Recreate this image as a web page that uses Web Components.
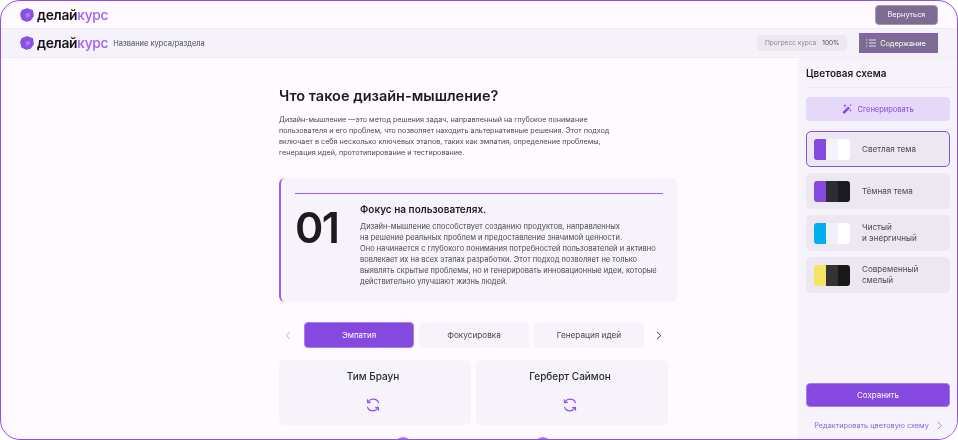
<!DOCTYPE html>
<html lang="ru">
<head>
<meta charset="utf-8">
<title>Делай курс</title>
<style>
  html, body { margin: 0; height: 100%; background: #fff; overflow: hidden; }
  body { font-family: Inter, "Noto Sans", sans-serif; color: #1d1b20; }
</style>
</head>
<body>
<app-frame>
  <top-bar></top-bar>
  <course-bar></course-bar>
  <div style="display:flex;flex:1;min-height:0">
    <lesson-main>
      <h-title slot="title">Что такое дизайн-мышление?</h-title>
      <step-card></step-card>
      <step-tabs></step-tabs>
      <div style="display:grid;grid-template-columns:192px 192px;gap:5px;margin-top:12px">
        <flip-card>Тим Браун</flip-card>
        <flip-card>Герберт Саймон</flip-card>
      </div>
      <div style="display:grid;grid-template-columns:192px 192px;gap:5px;margin-top:12px">
        <next-dot style="margin-left:115px"></next-dot>
        <next-dot style="margin-left:58px"></next-dot>
      </div>
    </lesson-main>
    <scheme-panel>
      <scheme-item a="#8549e0" b="#f5f2fa" c="#ffffff" selected>Светлая тема</scheme-item>
      <scheme-item a="#8549e0" b="#2e2c33" c="#1c1b1f">Тёмная тема</scheme-item>
      <scheme-item a="#00aff0" b="#eef1f5" c="#ffffff">Чистый<br>и энергичный</scheme-item>
      <scheme-item a="#f5e368" b="#333333" c="#191919">Современный<br>смелый</scheme-item>
    </scheme-panel>
  </div>
</app-frame>

<script>
const logo = `
  <svg width="14" height="14" viewBox="0 0 14 14" style="flex:none">
    <path d="M7 .9 12.3 2.8 13.1 8 10.2 12.1 6.4 13.1 2.2 11 .9 6 2.2 2.8Z" fill="#8a4fe6" stroke="#8a4fe6" stroke-width="1.6" stroke-linejoin="round"/>
    <path d="M5.4 6.2 9.6 4.4 10.2 8 6.6 10Z" fill="#b48cf2" opacity=".8"/>
  </svg>
  <span class="word">делай<b>курс</b></span>`;
const logoCss = `
  .logo { display: flex; align-items: center; gap: 3px; }
  .word { font: 600 13.8px/16px Inter, sans-serif; letter-spacing: -.3px; color: #17151b; }
  .word b { font-weight: 500; color: #a060f8; }`;

class AppFrame extends HTMLElement {
    connectedCallback() {
        this.attachShadow({ mode: 'open' }).innerHTML = `
            <style>
                :host {
                    display: flex; flex-direction: column; box-sizing: border-box;
                    width: 958px; height: 440px; overflow: hidden;
                    border: 1px solid #8f4ff0; border-radius: 20px; background: #fffaff;
                    will-change: transform;
                }
            </style>
            <slot></slot>`;
    }
}

class TopBar extends HTMLElement {
    connectedCallback() {
        this.attachShadow({ mode: 'open' }).innerHTML = `
            <style>
                :host {
                    display: flex; flex: none; justify-content: space-between; align-items: center;
                    height: 28px; padding: 0 19px; box-sizing: border-box;
                    border-bottom: 1px solid #eeebf2;
                }
                ${logoCss}
                button {
                    width: 63px; height: 20px; border: 1px solid #a596b8; border-radius: 4px; padding: 0;
                    background: #7d6b93; color: #fff; font: 400 7.3px Inter, sans-serif;
                }
            </style>
            <div class="logo">${logo}</div>
            <button>Вернуться</button>`;
    }
}

class CourseBar extends HTMLElement {
    connectedCallback() {
        this.attachShadow({ mode: 'open' }).innerHTML = `
            <style>
                :host {
                    display: flex; flex: none; align-items: center;
                    height: 29px; padding: 0 19px; box-sizing: border-box;
                    background: #f5f3f9; border-bottom: 1px solid #eeebf2;
                }
                ${logoCss}
                .name { margin-left: 5px; font-size: 7.5px; color: #4b4852; }
                .progress {
                    margin-left: auto; display: flex; align-items: center; gap: 6px;
                    width: 90px; height: 16px; padding: 0 8px; border-radius: 4px; box-sizing: border-box;
                    background: #ebe8ef; font-size: 6.5px; color: #8c8894; white-space: nowrap;
                }
                .progress b { font-weight: 400; color: #4b4852; }
                .contents {
                    margin-left: 12px; display: flex; align-items: center; justify-content: center; gap: 4px;
                    width: 79px; height: 20px; padding-right: 5px; box-sizing: border-box;
                    background: #7d6b93; border: solid #8f4ff0; border-width: 1px 0;
                    color: #fff; font-size: 7.3px;
                }
            </style>
            <div class="logo">${logo}</div>
            <span class="name">Название курса/раздела</span>
            <div class="progress">Прогресс курса <b>100%</b></div>
            <div class="contents">
                <svg width="10" height="8" viewBox="0 0 10 8" fill="none" stroke="#fff" stroke-width=".8">
                    <path d="M0 1h1.2M0 4h1.2M0 7h1.2M3 1h7M3 4h7M3 7h7"/>
                </svg>
                Содержание
            </div>`;
    }
}

class HTitle extends HTMLElement {
    connectedCallback() {
        this.attachShadow({ mode: 'open' }).innerHTML = `
            <style>:host { display: block; font-size: 14.5px; font-weight: 600; line-height: 20px; color: #1d1b20; }</style>
            <slot></slot>`;
    }
}

class LessonMain extends HTMLElement {
    connectedCallback() {
        this.attachShadow({ mode: 'open' }).innerHTML = `
            <style>
                :host { display: block; flex: 1; min-width: 0; padding: 28px 0 0 278px; box-sizing: border-box; }
                p { margin: 8px 0 20px; font-size: 7.2px; line-height: 11px; color: #4b4852; white-space: nowrap; }
            </style>
            <slot name="title"></slot>
            <p>Дизайн-мышление —это метод решения задач, направленный на глубокое понимание<br>
            пользователя и его проблем, что позволяет находить альтернативные решения. Этот подход<br>
            включает в себя несколько ключевых этапов, таких как эмпатия, определение проблемы,<br>
            генерация идей, прототипирование и тестирование.</p>
            <slot></slot>`;
    }
}

class StepCard extends HTMLElement {
    connectedCallback() {
        this.attachShadow({ mode: 'open' }).innerHTML = `
            <style>
                :host {
                    display: block; box-sizing: border-box; width: 399px; height: 124px;
                    padding: 15px 15px 0 14px; border-left: 2px solid #9a5cf5; border-radius: 6px;
                    background: #f6f3fa;
                }
                hr { margin: 0; border: 0; height: 1px; background: #9a5cf5; }
                .row { display: flex; margin-top: 9px; }
                .num { flex: none; width: 65px; font-size: 43px; font-weight: 600; line-height: 44px; margin-top: 2px; color: #1d1b20; letter-spacing: -1.5px; }
                h3 { margin: 0 0 5px; font-size: 10px; font-weight: 600; line-height: 13px; color: #1d1b20; }
                p { margin: 0; font-size: 7.5px; line-height: 11px; color: #4b4852; white-space: nowrap; }
            </style>
            <hr>
            <div class="row">
                <div class="num">01</div>
                <div>
                    <h3>Фокус на пользователях.</h3>
                    <p>Дизайн-мышление способствует созданию продуктов, направленных<br>
                    на решение реальных проблем и предоставление значимой ценности.<br>
                    Оно начинается с глубокого понимания потребностей пользователей и активно<br>
                    вовлекает их на всех этапах разработки. Этот подход позволяет не только<br>
                    выявлять скрытые проблемы, но и генерировать инновационные идеи, которые<br>
                    действительно улучшают жизнь людей.</p>
                </div>
            </div>`;
    }
}

class StepTabs extends HTMLElement {
    connectedCallback() {
        this.attachShadow({ mode: 'open' }).innerHTML = `
            <style>
                :host { display: flex; align-items: center; gap: 5px; margin-top: 20px; }
                svg { flex: none; }
                .prev { margin: 0 8px 0 6px; }
                .next { margin-left: 7px; }
                .tab {
                    flex: none; width: 110px; height: 26px; box-sizing: border-box; border-radius: 4px;
                    display: flex; align-items: center; justify-content: center;
                    background: #f6f3fa; font-size: 8.2px; color: #4b4852;
                }
                .tab.on { background: #8549e0; border: 1px solid #a77cec; color: #fff; font-size: 8px; }
            </style>
            <svg class="prev" width="6" height="9" viewBox="0 0 6 9" fill="none" stroke="#b4b0bb"><path d="M5 .8 1.2 4.5 5 8.2"/></svg>
            <div class="tab on">Эмпатия</div>
            <div class="tab">Фокусировка</div>
            <div class="tab">Генерация идей</div>
            <svg class="next" width="6" height="9" viewBox="0 0 6 9" fill="none" stroke="#36333c"><path d="M1 .8 4.8 4.5 1 8.2"/></svg>`;
    }
}

class FlipCard extends HTMLElement {
    connectedCallback() {
        this.attachShadow({ mode: 'open' }).innerHTML = `
            <style>
                :host {
                    display: flex; flex-direction: column; align-items: center;
                    height: 65px; padding: 9px 4px 0 0; box-sizing: border-box; border-radius: 5px;
                    background: #f6f3fa; font-size: 10px; font-weight: 500; line-height: 14px; color: #2b2930;
                }
                svg { margin-top: 15px; }
            </style>
            <slot></slot>
            <svg width="14" height="14" viewBox="0 0 14 14" fill="none" stroke="#9a4cf8" stroke-width="1.2">
                <path d="M12.6 5C11.8 2.6 9.6 1.2 7 1.2 5 1.2 3.2 2.2 2 3.8M1.4 1.4 1.6 4.6 4.8 4.4"/>
                <path d="M1.4 9C2.2 11.4 4.4 12.8 7 12.8c2 0 3.8-1 5-2.6M12.6 12.6 12.4 9.4 9.2 9.6"/>
            </svg>`;
    }
}

class NextDot extends HTMLElement {
    connectedCallback() {
        this.attachShadow({ mode: 'open' }).innerHTML = `
            <style>:host { display: block; width: 18px; height: 18px; border-radius: 50%; background: #a77cec; }</style>`;
    }
}

class SchemeItem extends HTMLElement {
    connectedCallback() {
        const [a, b, c] = ['a', 'b', 'c'].map(n => this.getAttribute(n));
        this.attachShadow({ mode: 'open' }).innerHTML = `
            <style>
                :host {
                    display: flex; align-items: center; gap: 12px;
                    height: 36px; padding: 0 8px; box-sizing: border-box; border-radius: 5px;
                    background: #ece7f1; font-size: 8.1px; line-height: 11px; color: #4b4852;
                }
                :host([selected]) { border: 1px solid #8a4fe6; padding: 0 7px; }
                .sw { display: flex; flex: none; width: 36px; height: 21px; border-radius: 3px; overflow: hidden; }
                .sw i { flex: 1; }
            </style>
            <div class="sw"><i style="background:${a}"></i><i style="background:${b}"></i><i style="background:${c}"></i></div>
            <div><slot></slot></div>`;
    }
}

class SchemePanel extends HTMLElement {
    connectedCallback() {
        this.attachShadow({ mode: 'open' }).innerHTML = `
            <style>
                :host {
                    display: flex; flex-direction: column; flex: none;
                    width: 159px; padding: 8px 7px 0 8px; box-sizing: border-box; background: #f6f3fa;
                }
                h2 { margin: 0; font-size: 10px; font-weight: 600; line-height: 14px; color: #1d1b20; }
                hr { margin: 7px 0 9px; border: 0; height: 1px; background: #ece9f0; }
                .gen {
                    display: flex; align-items: center; justify-content: center; gap: 5px;
                    height: 24px; border-radius: 4px; background: #e5d8f8; color: #8549e0; font-size: 7.5px;
                }
                .list { display: flex; flex-direction: column; gap: 6px; margin-top: 10px; }
                .save {
                    margin-top: auto; height: 24px; border-radius: 4px; background: #8549e0;
                    border: 1px solid #a77cec; box-sizing: border-box;
                    display: flex; align-items: center; justify-content: center; color: #fff; font-size: 8px;
                }
                .edit {
                    display: flex; align-items: center; justify-content: center; gap: 8px;
                    height: 32px; padding-top: 4px; box-sizing: border-box;
                    color: #8f5fe0; font-size: 7.3px; white-space: nowrap;
                }
            </style>
            <h2>Цветовая схема</h2>
            <hr>
            <div class="gen">
                <svg width="10" height="10" viewBox="0 0 10 10" fill="#8549e0">
                    <path d="M6.2 2.4 8 4.2 2.2 10 .4 8.2Z"/>
                    <path d="M3 0l.5 1.3 1.3.5-1.3.5L3 3.6l-.5-1.3-1.3-.5 1.3-.5ZM8.4 5l.4 1 1 .4-1 .4-.4 1-.4-1-1-.4 1-.4ZM8.4 0l.3.8.8.3-.8.3-.3.8-.3-.8-.8-.3.8-.3Z"/>
                </svg>
                Сгенерировать
            </div>
            <div class="list"><slot></slot></div>
            <div class="save">Сохранить</div>
            <div class="edit">Редактировать цветовую схему
                <svg width="5" height="9" viewBox="0 0 5 9" fill="none" stroke="#9d7fd8" stroke-width=".9"><path d="M.8.8 4.2 4.5.8 8.2"/></svg>
            </div>`;
    }
}

customElements.define('app-frame', AppFrame);
customElements.define('top-bar', TopBar);
customElements.define('course-bar', CourseBar);
customElements.define('h-title', HTitle);
customElements.define('lesson-main', LessonMain);
customElements.define('step-card', StepCard);
customElements.define('step-tabs', StepTabs);
customElements.define('flip-card', FlipCard);
customElements.define('next-dot', NextDot);
customElements.define('scheme-item', SchemeItem);
customElements.define('scheme-panel', SchemePanel);
</script>
</body>
</html>
